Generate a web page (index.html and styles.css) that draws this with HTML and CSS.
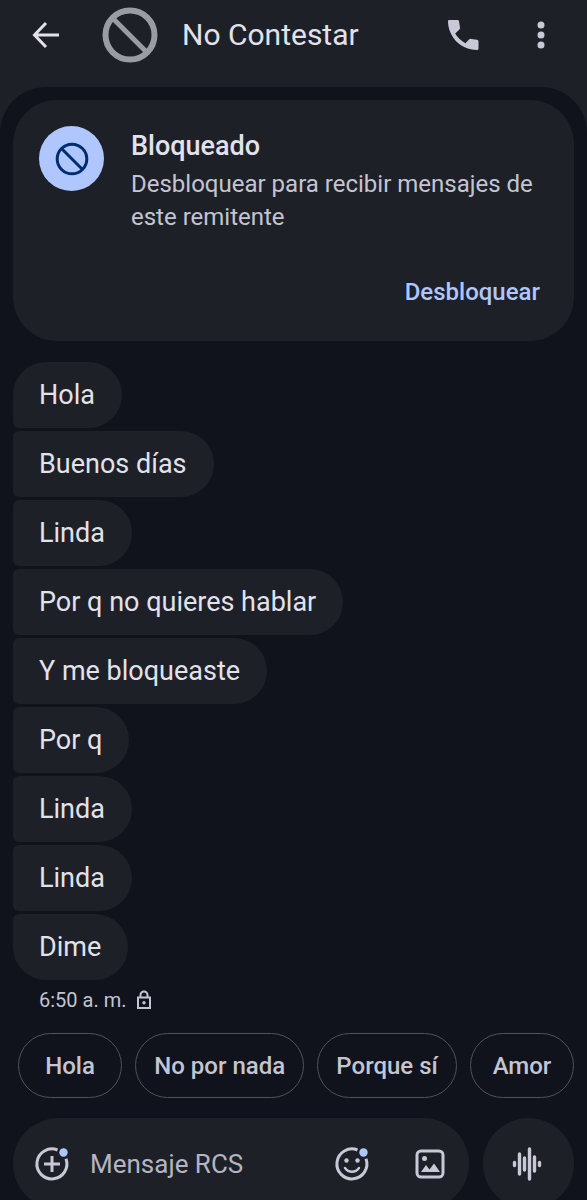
FILE: index.html
```html
<!DOCTYPE html>
<html lang="es">
<head>
    <meta charset="UTF-8">
    <meta name="viewport" content="width=device-width, initial-scale=1.0">
    <title>No Contestar - Mensajes</title>
    <link rel="stylesheet" href="styles.css">
</head>
<body>

    <header class="top-bar">
        <button class="icon-btn back" aria-label="Atrás">
            <svg width="40" height="40" viewBox="0 0 40 40" fill="none" stroke="currentColor" stroke-width="3">
                <path d="M33 20H9M20 8L8.500 20L20 32"/>
            </svg>
        </button>
        <svg class="avatar" width="56" height="56" viewBox="0 0 56 56" fill="none" stroke="currentColor" stroke-width="6">
            <circle cx="28" cy="28" r="24.500"/>
            <path d="M11 11.500L44.500 45" stroke-width="5"/>
        </svg>
        <h1>No Contestar</h1>
        <button class="icon-btn" aria-label="Llamar">
            <svg width="40" height="40" viewBox="0 0 40 40" fill="currentColor">
                <path d="M6 5H14.500Q15.800 5 16 6.300L17 12.500Q17.200 13.800 16.200 14.800L12.200 18.600Q15.600 24.600 22.400 28.200L26 24.600Q27 23.700 28.300 23.900L34 24.800Q35.500 25.100 35.500 26.500V33.500Q35.500 35 34 35C17 35 5 21 5 6Q5 5 6 5Z"/>
            </svg>
        </button>
        <button class="icon-btn" aria-label="Más opciones">
            <svg width="40" height="40" viewBox="0 0 40 40" fill="currentColor">
                <circle cx="20" cy="10" r="3.500"/>
                <circle cx="20" cy="20" r="3.500"/>
                <circle cx="20" cy="30" r="3.500"/>
            </svg>
        </button>
    </header>

    <main class="chat">
        <section class="card">
            <div class="card-icon">
                <svg width="34" height="34" viewBox="0 0 34 34" fill="none" stroke="currentColor" stroke-width="3">
                    <circle cx="17" cy="17" r="14.800"/>
                    <path d="M6.500 6.500L27.500 27.500"/>
                </svg>
            </div>
            <div class="card-text">
                <h2>Bloqueado</h2>
                <p>Desbloquear para recibir mensajes de este remitente</p>
            </div>
            <button class="unblock">Desbloquear</button>
        </section>

        <div class="messages">
            <p class="bubble">Hola</p>
            <p class="bubble">Buenos días</p>
            <p class="bubble">Linda</p>
            <p class="bubble">Por q no quieres hablar</p>
            <p class="bubble">Y me bloqueaste</p>
            <p class="bubble">Por q</p>
            <p class="bubble">Linda</p>
            <p class="bubble">Linda</p>
            <p class="bubble">Dime</p>
        </div>
        <div class="status">
            <span>6:50 a. m.</span>
            <svg width="16" height="20" viewBox="0 0 16 20" fill="none" stroke="currentColor" stroke-width="2">
                <path d="M2 7.500H14V18H2ZM4.500 7.500V5a3.500 3.500 0 0 1 7 0V7.500"/>
                <circle cx="8" cy="12.700" r="1.700" fill="currentColor" stroke="none"/>
            </svg>
        </div>

        <div class="replies">
            <button>Hola</button>
            <button>No por nada</button>
            <button>Porque sí</button>
            <button>Amor</button>
        </div>

        <form class="composer">
            <div class="field">
                <button type="button" class="icon-btn" aria-label="Adjuntar">
                    <svg width="40" height="40" viewBox="0 0 40 40" fill="none" stroke="currentColor" stroke-width="3">
                        <path d="M25.500 6A15 15 0 1 0 34 14.800M20 12V28M12 20H28"/>
                        <circle class="dot" cx="31.500" cy="8.500" r="4.200"/>
                    </svg>
                </button>
                <input type="text" placeholder="Mensaje RCS" aria-label="Mensaje RCS">
                <button type="button" class="icon-btn" aria-label="Emojis">
                    <svg width="40" height="40" viewBox="0 0 40 40" fill="none" stroke="currentColor" stroke-width="3">
                        <path d="M25.500 6A15 15 0 1 0 34 14.800"/>
                        <path d="M13 24c3.500 5 10.500 5 14 0" stroke-width="2.400" stroke-linecap="round"/>
                        <circle cx="14.500" cy="16.500" r="2.200" fill="currentColor" stroke="none"/>
                        <circle cx="25.500" cy="16.500" r="2.200" fill="currentColor" stroke="none"/>
                        <circle class="dot" cx="31.500" cy="8.500" r="4.200"/>
                    </svg>
                </button>
                <button type="button" class="icon-btn" aria-label="Galería">
                    <svg width="40" height="40" viewBox="0 0 40 40" fill="none" stroke="currentColor" stroke-width="3">
                        <rect x="7" y="7" width="26" height="26" rx="4"/>
                        <circle cx="14.500" cy="14.500" r="2.500" fill="currentColor" stroke="none"/>
                        <path d="M11 28L16 21L19.500 25.500L24 19.500L30 28Z" fill="currentColor" stroke="none"/>
                    </svg>
                </button>
            </div>
            <button type="button" class="voice" aria-label="Grabar audio">
                <svg width="40" height="40" viewBox="0 0 40 40" fill="none" stroke="currentColor" stroke-width="3.400" stroke-linecap="round">
                    <path d="M5.500 18.500V21.500M10.500 10V30M15.500 14V26M20.500 5V35M25.500 13V27M30.500 18.500V21.500"/>
                </svg>
            </button>
        </form>
    </main>

</body>
</html>
```
FILE: styles.css
```css
* {
    box-sizing: border-box;
}
body {
    margin: 0;
    height: 100vh;
    overflow: hidden;
    background: #1e2028;
    color: #e2e2ec;
    font-family: Roboto, "Liberation Sans", sans-serif;
}
h1, h2, p {
    margin: 0;
    font-weight: 400;
}
button {
    padding: 0;
    border: none;
    background: none;
    color: inherit;
    font: inherit;
    cursor: pointer;
}
svg {
    display: block;
    flex: none;
}

/* top bar */
.top-bar {
    display: flex;
    align-items: center;
    height: 87px;
    padding: 0 26px 18px;
    color: #c8c8d6;
}
.back {
    color: #e2e2ec;
}
.avatar {
    margin: 0 24px 0 36px;
    color: #9a9ca3;
}
.top-bar h1 {
    flex: 1;
    color: #e2e2ec;
    font-size: 30px;
}
.top-bar .icon-btn + .icon-btn {
    margin-left: 38px;
}

.chat {
    padding: 13px 13px 0;
    border-radius: 46px 46px 0 0;
    background: #10131b;
}

/* blocked notice */
.card {
    display: grid;
    grid-template-columns: 65px 1fr;
    column-gap: 27px;
    padding: 26px 34px 32px 26px;
    border-radius: 44px;
    background: #1e2028;
}
.card-icon {
    display: flex;
    align-items: center;
    justify-content: center;
    width: 65px;
    height: 65px;
    border-radius: 50%;
    background: #b0c6ff;
    color: #002d6e;
}
.card h2 {
    font-size: 27px;
    font-weight: 500;
    line-height: 40px;
}
.card p {
    margin-top: 2px;
    color: #c4c5d2;
    font-size: 24px;
    line-height: 33px;
}
.unblock {
    grid-column: 2;
    justify-self: end;
    margin-top: 41px;
    color: #b0c6ff;
    font-size: 24px;
    font-weight: 500;
    line-height: 34px;
}

/* messages */
.messages {
    display: flex;
    flex-direction: column;
    align-items: flex-start;
    gap: 3px;
    margin-top: 21px;
}
.bubble {
    padding: 16px 27px 16px 26px;
    border-radius: 6px 33px 33px 6px;
    background: #1e2028;
    font-size: 27px;
    line-height: 34px;
}
.bubble:first-child {
    border-top-left-radius: 33px;
}
.bubble:last-child {
    border-bottom-left-radius: 33px;
}
.status {
    display: flex;
    align-items: center;
    gap: 10px;
    padding: 6px 26px 0;
    color: #c4c5d2;
    font-size: 20px;
    line-height: 28px;
}

/* quick replies */
.replies {
    display: flex;
    justify-content: space-between;
    margin: 19px 0 20px 5px;
}
.replies button {
    min-width: 104px;
    height: 65px;
    padding: 0 18px;
    border: 1px solid #50525b;
    border-radius: 33px;
    color: #c4c5d2;
    font-size: 24px;
    font-weight: 500;
    white-space: nowrap;
}

/* composer */
.composer {
    display: flex;
    gap: 14px;
    color: #c8c8d6;
}
.field {
    display: flex;
    flex: 1;
    align-items: center;
    min-width: 0;
    height: 91px;
    padding: 0 19px;
    border-radius: 46px;
    background: #1e2028;
}
.field input {
    flex: 1;
    min-width: 0;
    padding: 0 18px;
    border: none;
    outline: none;
    background: none;
    color: inherit;
    font: inherit;
    font-size: 26px;
}
.field input::placeholder {
    color: #b4b5c1;
}
.field .icon-btn + .icon-btn {
    margin-left: 38px;
}
.voice {
    display: flex;
    align-items: center;
    justify-content: center;
    width: 91px;
    height: 91px;
    border-radius: 50%;
    background: #1e2028;
}
.dot {
    fill: #b0c6ff;
    stroke: none;
}
```
